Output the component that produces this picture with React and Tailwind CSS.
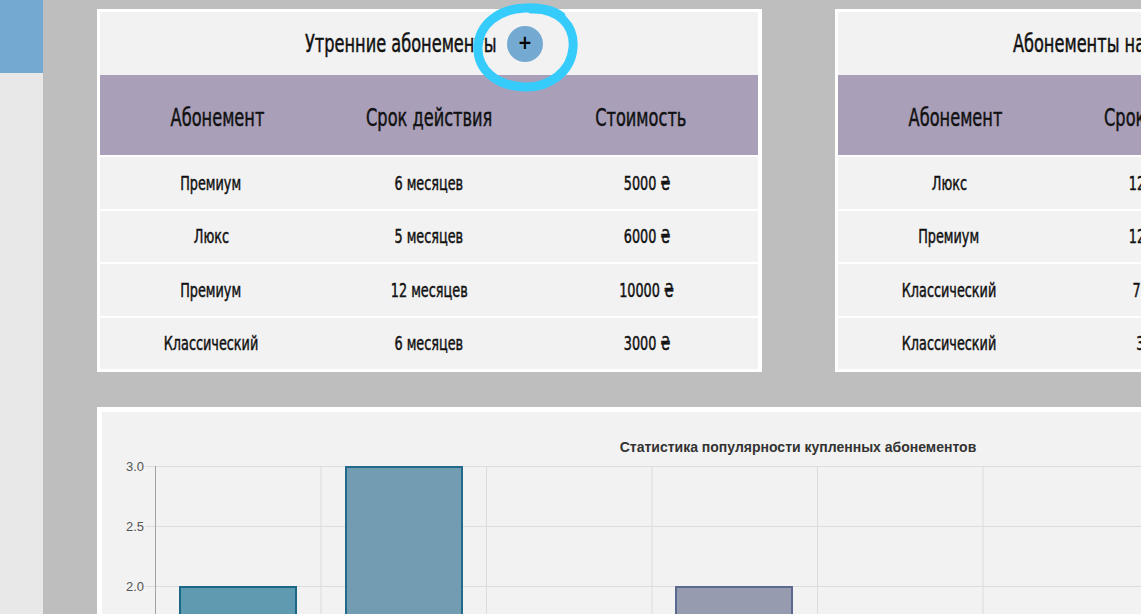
import React from "react";

const morning = [
  ["Премиум", "6 месяцев", "5000 ₴"],
  ["Люкс", "5 месяцев", "6000 ₴"],
  ["Премиум", "12 месяцев", "10000 ₴"],
  ["Классический", "6 месяцев", "3000 ₴"],
];

const allDay = [
  ["Люкс", "12 месяцев", "15000 ₴"],
  ["Премиум", "12 месяцев", "10000 ₴"],
  ["Классический", "7 месяцев", "4000 ₴"],
  ["Классический", "3 месяца", "2000 ₴"],
];

// hand-drawn marker around the add button
function Marker() {
  return (
    <svg className="absolute left-[-38px] top-[-26px] pointer-events-none" width="112" height="94" viewBox="0 0 112 94">
      <path
        d="M62 9 C90 8 106 26 104 48 C102 72 80 88 55 87 C28 86 8 70 9 47 C10 24 30 9 56 8 C70 7 84 10 92 16"
        fill="none"
        stroke="#35ccfb"
        strokeWidth="9"
        strokeLinecap="round"
      />
    </svg>
  );
}

// narrow text, the page uses a condensed face
function N({ children, className = "" }) {
  return <span className={"inline-block scale-x-[0.75] [-webkit-text-stroke:0.45px_#111] " + className}>{children}</span>;
}

function SubsCard({ title, rows, marked }) {
  return (
    <div className="w-[665px] shrink-0 border-t-[3px] border-b-[3px] border-l-[3px] border-r-[4px] border-white bg-[#f2f2f2] text-[#111]">
      <div className="h-[63px] flex items-center justify-end gap-[10px] pr-[215px]">
        <N className="origin-right text-[24px] whitespace-nowrap">{title}</N>
        <div className="relative shrink-0">
          <button className="w-[36px] h-[36px] rounded-full bg-[#74a9d1] flex items-center justify-center text-black text-[19px] font-bold leading-none pb-[2px]">
            +
          </button>
          {marked && <Marker />}
        </div>
      </div>
      <div className="grid grid-cols-[234px_190px_234px] h-[80px] pt-[6px] items-center bg-[#a99fb9] text-[24px] text-center whitespace-nowrap">
        <div><N>Абонемент</N></div>
        <div><N>Срок действия</N></div>
        <div><N>Стоимость</N></div>
      </div>
      {rows.map((r, i) => (
        <div
          key={i}
          className="grid grid-cols-[222px_214px_222px] h-[53.5px] items-center border-t-2 border-white text-[19px] text-center whitespace-nowrap"
        >
          <div><N>{r[0]}</N></div>
          <div><N>{r[1]}</N></div>
          <div><N>{r[2]}</N></div>
        </div>
      ))}
    </div>
  );
}

function Chart() {
  const ys = [
    { y: 54, t: "3.0" },
    { y: 114, t: "2.5" },
    { y: 174, t: "2.0" },
    { y: 234, t: "1.5" },
  ];
  const bars = [
    { x: 77, top: 174, fill: "#5f9bb0", stroke: "#1b6787" },
    { x: 243, top: 54, fill: "#729cb1", stroke: "#236a8a" },
    { x: 573, top: 174, fill: "#979bb0", stroke: "#5b6890" },
  ];
  return (
    <svg width="1100" height="260" className="block">
      <text x="696" y="40" textAnchor="middle" fontFamily="Liberation Sans, Arial, sans-serif" fontWeight="bold" fontSize="14" fill="#333">
        Статистика популярности купленных абонементов
      </text>
      {ys.map((g) => (
        <g key={g.t}>
          <line x1="43" x2="1100" y1={g.y + 0.5} y2={g.y + 0.5} stroke="#dcdcdc" />
          <text x="42" y={g.y + 5} textAnchor="end" fontFamily="Liberation Sans, Arial, sans-serif" fontSize="13" fill="#555">
            {g.t}
          </text>
        </g>
      ))}
      {[1, 2, 3, 4, 5, 6].map((i) => (
        <line key={i} x1={53.5 + 165.5 * i} x2={53.5 + 165.5 * i} y1="54" y2="260" stroke="#dcdcdc" />
      ))}
      <line x1="53.5" x2="53.5" y1="54" y2="260" stroke="#a3a3a3" />
      {bars.map((b, i) => (
        <rect key={i} x={b.x + 1} y={b.top + 1} width="116" height={260 - b.top} fill={b.fill} stroke={b.stroke} strokeWidth="2" />
      ))}
    </svg>
  );
}

export default function App() {
  return (
    <div className="flex w-[1141px] h-[614px] overflow-hidden bg-[#bebebe] font-['DejaVu_Sans_Condensed','DejaVu_Sans',sans-serif]">
      <div className="w-[43px] shrink-0 bg-[#e8e8e8]">
        <div className="h-[73px] bg-[#74a9d1]"></div>
      </div>
      <div className="flex-1 flex flex-col pl-[54px] pt-[9px] overflow-hidden">
        <div className="flex gap-[73px]">
          <SubsCard title="Утренние абонементы" rows={morning} marked />
          <SubsCard title="Абонементы на весь день" rows={allDay} />
        </div>
        <div className="mt-[35px] w-[1100px] h-[300px] shrink-0 border-[5px] border-white bg-[#f2f2f2]">
          <Chart />
        </div>
      </div>
    </div>
  );
}
